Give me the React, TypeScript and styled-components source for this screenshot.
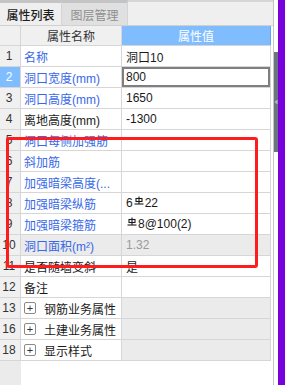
import React from 'react'
import styled, { createGlobalStyle } from 'styled-components'

const GlobalStyle = createGlobalStyle`
  html, body {
    margin: 0;
    padding: 0;
    background: #ffffff;
  }
  body {
    width: 285px;
    height: 385px;
    overflow: hidden;
    font-family: 'Liberation Sans', 'Noto Sans CJK SC', sans-serif;
    font-size: 12px;
    color: #1a1a1a;
  }
`

const Screen = styled.div`
  display: flex;
  width: 285px;
  height: 385px;
`

const Panel = styled.div`
  position: relative;
  display: flex;
  flex-direction: column;
  width: 273px;
  height: 100%;
  background: #ffffff;
`

const Divider = styled.div`
  width: 1px;
  background: #c4c4c4;
`

const Splitter = styled.div`
  display: flex;
  flex-direction: column;
  width: 4px;
  padding-top: 52px;
  background: #ffffff;
`

const Handle = styled.div`
  display: flex;
  align-items: center;
  justify-content: center;
  height: 100px;
  background: #6b757d;
`

const Accent = styled.div`
  width: 7px;
  background: #7700dc;
`

const TabBar = styled.div`
  display: flex;
  height: 26px;
  box-sizing: border-box;
  background: #efefef;
  border-top: 2px solid #d6d6d6;
  border-bottom: 1px solid #d0d0d0;
`

const Tab = styled.div<{ active?: boolean; w: number }>`
  display: flex;
  align-items: center;
  justify-content: center;
  width: ${({ w }) => w}px;
  margin-top: -2px;
  border-top: 3px solid #c4c4c4;
  border-right: 1px solid #d4d4d4;
  box-sizing: border-box;
  font-family: 'Noto Sans CJK SC', sans-serif;
  font-size: 12px;
  font-weight: ${({ active }) => (active ? 500 : 400)};
  background: ${({ active }) => (active ? '#efefef' : '#e0e0e0')};
  color: ${({ active }) => (active ? '#1c1c1c' : '#8f8f8f')};
`

const Grid = styled.div`
  position: relative;
  flex: 1;
  display: flex;
  flex-direction: column;
  width: 271px;
`

const Row = styled.div<{ h?: number }>`
  display: flex;
  height: ${({ h }) => h || 21}px;
  box-sizing: border-box;
  border-bottom: 1px solid #d6d6d6;
`

const NumCell = styled.div<{ selected?: boolean }>`
  display: flex;
  align-items: center;
  justify-content: center;
  width: 21px;
  padding-right: 2px;
  box-sizing: border-box;
  border-right: 1px solid #d6d6d6;
  font-size: 12px;
  background: ${({ selected }) => (selected ? '#80bdff' : '#f0f0f0')};
  color: ${({ selected }) => (selected ? '#ffffff' : '#333333')};
`

const NameCell = styled.div<{ tone?: 'blue' | 'dark'; shaded?: boolean }>`
  display: flex;
  align-items: center;
  gap: 8px;
  width: 101px;
  padding-left: 3px;
  box-sizing: border-box;
  border-right: 1px solid #d6d6d6;
  white-space: nowrap;
  overflow: hidden;
  color: ${({ tone }) => (tone === 'blue' ? '#3868e8' : '#1a1a1a')};
  background: ${({ shaded }) => (shaded ? '#ebebeb' : '#ffffff')};
`

const ValueCell = styled.div<{ shaded?: boolean; muted?: boolean; editing?: boolean }>`
  display: flex;
  align-items: center;
  width: 149px;
  padding-left: 4px;
  box-sizing: border-box;
  border-right: 1px solid #d6d6d6;
  white-space: nowrap;
  color: ${({ muted }) => (muted ? '#9a9a9a' : '#1a1a1a')};
  background: ${({ shaded }) => (shaded ? '#ebebeb' : '#ffffff')};
  box-shadow: ${({ editing }) => (editing ? 'inset 0 0 0 2px #7f7f7f' : 'none')};
`

const HeadCell = styled.div<{ w: number; hot?: boolean }>`
  display: flex;
  align-items: center;
  justify-content: center;
  width: ${({ w }) => w}px;
  box-sizing: border-box;
  border-right: 1px solid ${({ hot }) => (hot ? '#5fa5f5' : '#d6d6d6')};
  font-family: 'Noto Sans CJK SC', sans-serif;
  background: ${({ hot }) => (hot ? '#80bdff' : '#f0f0f0')};
  color: ${({ hot }) => (hot ? '#ffffff' : '#333333')};
`

const Filler = styled.div`
  flex: 1;
  display: flex;
`

const FillerNum = styled.div`
  width: 21px;
  background: #ebebeb;
`

const ExpandBox = styled.span`
  display: inline-flex;
  align-items: center;
  justify-content: center;
  width: 10px;
  height: 10px;
  border: 1px solid #8a8a8a;
  border-radius: 2px;
  font-size: 11px;
  line-height: 1;
  color: #333;
  background: #fff;
`

const Mark = styled.div`
  position: absolute;
  left: 6px;
  top: 111px;
  width: 252px;
  height: 131px;
  box-sizing: border-box;
  border: 3px solid #ff1c1c;
  border-radius: 3px;
  pointer-events: none;
`

const Rebar = () => (
  <svg width="10" height="10" viewBox="0 0 10 10" style={{ margin: '0 1px 4px 1px' }}>
    <g stroke="#1a1a1a" strokeWidth="1.1" fill="none">
      <line x1="5" y1="0.5" x2="5" y2="8" />
      <rect x="2" y="2.5" width="6" height="3" />
      <line x1="0.5" y1="8" x2="9.5" y2="8" />
    </g>
  </svg>
)

type Item = {
  no: string
  name: string
  value?: React.ReactNode
  blue?: boolean
  group?: boolean
  shaded?: boolean
}

const items: Item[] = [
  { no: '1', name: '名称', value: '洞口10', blue: true },
  { no: '2', name: '洞口宽度(mm)', value: '800', blue: true },
  { no: '3', name: '洞口高度(mm)', value: '1650', blue: true },
  { no: '4', name: '离地高度(mm)', value: '-1300' },
  { no: '5', name: '洞口每侧加强筋', blue: true },
  { no: '6', name: '斜加筋', blue: true },
  { no: '7', name: '加强暗梁高度(...', blue: true },
  { no: '8', name: '加强暗梁纵筋', value: <>6<Rebar />22</>, blue: true },
  { no: '9', name: '加强暗梁箍筋', value: <><Rebar />8@100(2)</>, blue: true },
  { no: '10', name: '洞口面积(m²)', value: '1.32', blue: true, shaded: true },
  { no: '11', name: '是否随墙变斜', value: '是' },
  { no: '12', name: '备注' },
  { no: '13', name: '钢筋业务属性', group: true },
  { no: '16', name: '土建业务属性', group: true },
  { no: '18', name: '显示样式', group: true },
]

const App = () => {
  return (
    <Screen>
      <GlobalStyle />
      <Panel>
        <TabBar>
          <Tab active w={62}>属性列表</Tab>
          <Tab w={66}>图层管理</Tab>
        </TabBar>
        <Grid>
          <Row h={20}>
            <HeadCell w={21} />
            <HeadCell w={101}>属性名称</HeadCell>
            <HeadCell w={149} hot>属性值</HeadCell>
          </Row>
          {items.map((item) => (
            <Row key={item.no}>
              <NumCell selected={item.no === '2'}>{item.no}</NumCell>
              <NameCell tone={item.blue ? 'blue' : 'dark'} shaded={item.shaded}>
                {item.group && <ExpandBox>+</ExpandBox>}
                {item.name}
              </NameCell>
              <ValueCell
                shaded={item.shaded || item.group}
                muted={item.shaded}
                editing={item.no === '2'}
              >
                {item.value}
              </ValueCell>
            </Row>
          ))}
          <Filler>
            <FillerNum />
          </Filler>
          <Mark />
        </Grid>
      </Panel>
      <Divider />
      <Splitter>
        <Handle>
          <svg width="4" height="6" viewBox="0 0 4 6">
            <polygon points="3.5,0.5 0.5,3 3.5,5.5" fill="#b5bcc2" />
          </svg>
        </Handle>
      </Splitter>
      <Accent />
    </Screen>
  )
}

export default App
